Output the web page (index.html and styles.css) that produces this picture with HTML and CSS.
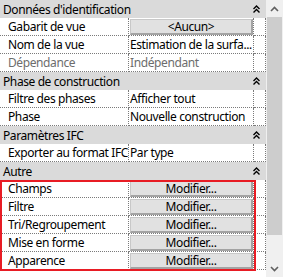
FILE: index.html
```html
<!DOCTYPE html>
<html lang="fr">
<head>
    <meta charset="UTF-8">
    <title>Propriétés</title>
    <link rel="stylesheet" href="styles.css">
</head>
<body>
    <div class="panel">
        <div class="grid">
            <div class="group-head">
                <span>Données d'identification</span>
                <svg class="collapse" width="7" height="8" viewBox="0 0 7 8"><path d="M0.5 4 L3.5 1 L6.5 4 M0.5 7.5 L3.5 4.5 L6.5 7.5" fill="none" stroke="#000" stroke-width="1.4"/></svg>
            </div>
            <div class="row">
                <div class="label">Gabarit de vue</div>
                <div class="value"><button class="btn">&lt;Aucun&gt;</button></div>
                <div class="edge"></div>
            </div>
            <div class="row">
                <div class="label">Nom de la vue</div>
                <div class="value">Estimation de la surfa...</div>
                <div class="edge"></div>
            </div>
            <div class="row disabled">
                <div class="label">Dépendance</div>
                <div class="value">Indépendant</div>
                <div class="edge"></div>
            </div>

            <div class="group-head">
                <span>Phase de construction</span>
                <svg class="collapse" width="7" height="8" viewBox="0 0 7 8"><path d="M0.5 4 L3.5 1 L6.5 4 M0.5 7.5 L3.5 4.5 L6.5 7.5" fill="none" stroke="#000" stroke-width="1.4"/></svg>
            </div>
            <div class="row">
                <div class="label">Filtre des phases</div>
                <div class="value">Afficher tout</div>
                <div class="edge"></div>
            </div>
            <div class="row">
                <div class="label">Phase</div>
                <div class="value">Nouvelle construction</div>
                <div class="edge"></div>
            </div>

            <div class="group-head">
                <span>Paramètres IFC</span>
                <svg class="collapse" width="7" height="8" viewBox="0 0 7 8"><path d="M0.5 4 L3.5 1 L6.5 4 M0.5 7.5 L3.5 4.5 L6.5 7.5" fill="none" stroke="#000" stroke-width="1.4"/></svg>
            </div>
            <div class="row">
                <div class="label">Exporter au format IFC</div>
                <div class="value">Par type</div>
                <div class="edge"></div>
            </div>

            <div class="group-head">
                <span>Autre</span>
                <svg class="collapse" width="7" height="8" viewBox="0 0 7 8"><path d="M0.5 4 L3.5 1 L6.5 4 M0.5 7.5 L3.5 4.5 L6.5 7.5" fill="none" stroke="#000" stroke-width="1.4"/></svg>
            </div>
            <div class="highlight">
                <div class="row">
                    <div class="label">Champs</div>
                    <div class="value"><button class="btn">Modifier...</button></div>
                    <div class="edge"></div>
                </div>
                <div class="row">
                    <div class="label">Filtre</div>
                    <div class="value"><button class="btn">Modifier...</button></div>
                    <div class="edge"></div>
                </div>
                <div class="row">
                    <div class="label">Tri/Regroupement</div>
                    <div class="value"><button class="btn">Modifier...</button></div>
                    <div class="edge"></div>
                </div>
                <div class="row">
                    <div class="label">Mise en forme</div>
                    <div class="value"><button class="btn">Modifier...</button></div>
                    <div class="edge"></div>
                </div>
                <div class="row">
                    <div class="label">Apparence</div>
                    <div class="value"><button class="btn">Modifier...</button></div>
                    <div class="edge"></div>
                </div>
            </div>
        </div>

        <div class="scrollbar">
            <div class="arrow">
                <svg width="9" height="6" viewBox="0 0 9 6"><path d="M1 5 L4.5 1.5 L8 5" fill="none" stroke="#606060" stroke-width="1.6"/></svg>
            </div>
            <div class="thumb"></div>
            <div class="track"></div>
            <div class="arrow">
                <svg width="9" height="6" viewBox="0 0 9 6"><path d="M1 1 L4.5 4.5 L8 1" fill="none" stroke="#606060" stroke-width="1.6"/></svg>
            </div>
        </div>
    </div>
</body>
</html>
```

FILE: styles.css
```css
body {
    margin: 0;
    background-color: #fff;
    font-family: "Noto Sans", "Open Sans", sans-serif;
    font-size: 12px;
    letter-spacing: -0.4px;
    color: #000;
}

.panel {
    display: flex;
    width: 283px;
    height: 277px;
}

.grid {
    width: 266px;
}

.group-head {
    display: flex;
    align-items: center;
    justify-content: space-between;
    height: 18px;
    padding-left: 3px;
    padding-right: 6px;
    background-color: #dadada;
}

.collapse {
    display: block;
}

.row {
    display: grid;
    grid-template-columns: 129px 125px 12px;
    height: 18px;
}

.row > div {
    box-sizing: border-box;
    border-right: 1px dotted #7a7a7a;
    border-bottom: 1px dotted #7a7a7a;
    white-space: nowrap;
    overflow: hidden;
    line-height: 17px;
}

.label {
    padding-left: 8px;
}

.value {
    padding-left: 1px;
}

.disabled {
    color: #6d6d6d;
}

.btn {
    display: block;
    box-sizing: border-box;
    width: 123px;
    height: 16px;
    margin-top: 1px;
    padding: 0;
    border-style: solid;
    border-width: 1px 2px 2px 1px;
    border-color: #c8c8c8 #a3a3a3 #a3a3a3 #c8c8c8;
    background-color: #e1e1e1;
    font-family: inherit;
    font-size: 12px;
    letter-spacing: inherit;
    line-height: 12px;
    color: #000;
}

.highlight {
    position: relative;
}

.highlight::after {
    content: "";
    position: absolute;
    top: 0;
    left: 0;
    width: 256px;
    height: 91px;
    box-sizing: border-box;
    border: 2px solid #e81c24;
}

.scrollbar {
    display: flex;
    flex-direction: column;
    width: 17px;
    background-color: #f0f0f0;
}

.arrow {
    display: flex;
    align-items: center;
    justify-content: center;
    height: 17px;
}

.thumb {
    height: 218px;
    margin: 0 1px;
    background-color: #cdcdcd;
}

.track {
    flex: 1;
}
```
